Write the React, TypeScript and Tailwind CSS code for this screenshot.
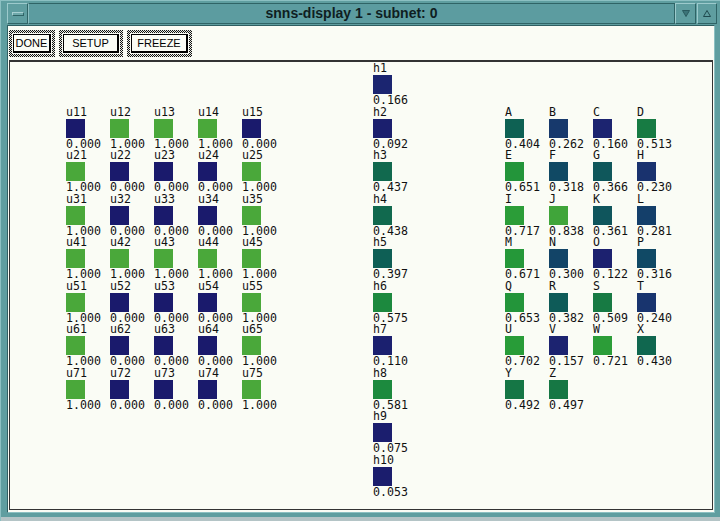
import type { ReactNode } from 'react'

const inputs = [
  [0, 1, 1, 1, 0],
  [1, 0, 0, 0, 1],
  [1, 0, 0, 0, 1],
  [1, 1, 1, 1, 1],
  [1, 0, 0, 0, 1],
  [1, 0, 0, 0, 1],
  [1, 0, 0, 0, 1],
]

const hidden = [0.166, 0.092, 0.437, 0.438, 0.397, 0.575, 0.11, 0.581, 0.075, 0.053]

const outputs: [string, number][] = [
  ['A', 0.404], ['B', 0.262], ['C', 0.16], ['D', 0.513],
  ['E', 0.651], ['F', 0.318], ['G', 0.366], ['H', 0.23],
  ['I', 0.717], ['J', 0.838], ['K', 0.361], ['L', 0.281],
  ['M', 0.671], ['N', 0.3], ['O', 0.122], ['P', 0.316],
  ['Q', 0.653], ['R', 0.382], ['S', 0.509], ['T', 0.24],
  ['U', 0.702], ['V', 0.157], ['W', 0.721], ['X', 0.43],
  ['Y', 0.492], ['Z', 0.497],
]

// activation -> colour, dark blue (0) through teal to green (1)
const stops: [number, number[]][] = [
  [0, [26, 26, 108]],
  [0.15, [28, 34, 112]],
  [0.25, [24, 54, 110]],
  [0.32, [16, 74, 100]],
  [0.4, [14, 96, 84]],
  [0.5, [22, 120, 68]],
  [0.6, [30, 142, 60]],
  [0.7, [40, 156, 56]],
  [0.85, [66, 166, 58]],
  [1, [74, 168, 58]],
]

function actColor(v: number) {
  for (let i = 1; i < stops.length; i++) {
    const [b, cb] = stops[i]
    const [a, ca] = stops[i - 1]
    if (v <= b) {
      const t = (v - a) / (b - a)
      const c = ca.map((x, k) => Math.round(x + (cb[k] - x) * t))
      return `rgb(${c[0]},${c[1]},${c[2]})`
    }
  }
  return 'rgb(74,168,58)'
}

function Unit({ label, value }: { label: string; value: number }) {
  return (
    <div className="flex flex-col items-start">
      <span className="h-[10px] leading-[10px]">{label}</span>
      <div
        className="mt-[2px] h-[19px] w-[19px]"
        style={{ backgroundColor: actColor(value) }}
      />
      <span className="mt-[1px] h-[10px] leading-[10px]">{value.toFixed(3)}</span>
    </div>
  )
}

function CmdButton({ width, children }: { width: string; children: ReactNode }) {
  return (
    <div className="bg-[repeating-conic-gradient(#111_0_25%,#e8ece4_0_50%)] bg-size-[2px_2px] p-[3px]">
      <div className="bg-[#fafcf5] p-[1px]">
        <div
          className={`${width} flex h-[19px] items-center justify-center border border-r-2 border-b-2 border-black bg-[#fafcf5] pt-[1px] font-['Liberation_Sans',sans-serif] text-[11px] text-black`}
        >
          {children}
        </div>
      </div>
    </div>
  )
}

export default function App() {
  return (
    <div className="flex h-[521px] w-[720px] flex-col overflow-hidden border-t border-l border-[#8cc0c2] bg-[#5f9ea0]">
      {/* ===== TITLE BAR ===== */}
      <div className="flex h-[24px] pt-[2px] pr-[3px] pl-[6px]">
        <div className="flex h-[21px] w-[21px] items-center justify-center border-t border-l border-r border-b border-t-[#9ccacc] border-l-[#9ccacc] border-r-[#2f6466] border-b-[#2f6466]">
          <div className="h-[4px] w-[12px] border-t border-l border-r border-b border-t-[#a8d0d2] border-l-[#a8d0d2] border-r-[#2f6466] border-b-[#2f6466] bg-[#6ea8aa]" />
        </div>
        <div className="flex h-[21px] flex-1 items-center justify-center border-t border-l border-r border-b border-t-[#2f6466] border-l-[#8cc0c2] border-r-[#2f6466] border-b-[#2f6466] bg-[#5c9ca0] font-['Liberation_Sans',sans-serif] text-[14px] font-bold text-[#0f1e22]">
          snns-display 1 - subnet: 0
        </div>
        <div className="flex h-[21px] w-[21px] items-center justify-center border-t border-l border-r border-b border-t-[#9ccacc] border-l-[#9ccacc] border-r-[#2f6466] border-b-[#2f6466]">
          <svg width="8" height="7" viewBox="0 0 8 7">
            <path d="M0.5 0.5 L7.5 0.5 L4 6.5 Z" fill="#3c7478" stroke="#2a5a5e" strokeWidth="1" />
          </svg>
        </div>
        <div className="ml-[1px] flex h-[21px] w-[20px] items-center justify-center border-t border-l border-r border-b border-t-[#9ccacc] border-l-[#9ccacc] border-r-[#2f6466] border-b-[#2f6466]">
          <svg width="8" height="7" viewBox="0 0 8 7">
            <path d="M4 0.5 L7.5 6.5 L0.5 6.5 Z" fill="none" stroke="#1f4a4e" strokeWidth="1" />
          </svg>
        </div>
      </div>

      {/* ===== CONTENT ===== */}
      <div className="mr-[5px] ml-[6px] flex flex-1 flex-col border-t border-l border-r border-b border-t-[#2f5f62] border-l-[#2f5f62] border-r-[#8cc0c2] border-b-[#8cc0c2] bg-[#fafcf5]">
        {/* buttons */}
        <div className="flex gap-[4px] pt-[4px] pl-[1px]">
          <CmdButton width="w-[38px]">DONE</CmdButton>
          <CmdButton width="w-[56px]">SETUP</CmdButton>
          <CmdButton width="w-[57px]">FREEZE</CmdButton>
        </div>

        {/* network canvas */}
        <div className="mx-[1px] mt-[3px] mb-[2px] flex flex-1 border border-t-2 border-[#333] pt-[1px] pl-[56px] font-['DejaVu_Sans_Mono',monospace] text-[11.6px] text-[#111]">
          <div className="mt-[43.5px] grid auto-rows-[43.5px] grid-cols-[repeat(5,44px)] self-start">
            {inputs.map((row, r) =>
              row.map((v, c) => (
                <Unit key={`u${r}${c}`} label={`u${r + 1}${c + 1}`} value={v} />
              )),
            )}
          </div>

          <div className="ml-[87px] grid w-[44px] auto-rows-[43.5px] self-start">
            {hidden.map((v, i) => (
              <Unit key={`h${i}`} label={`h${i + 1}`} value={v} />
            ))}
          </div>

          <div className="mt-[43.5px] ml-[88px] grid auto-rows-[43.5px] grid-cols-[repeat(4,44px)] self-start">
            {outputs.map(([l, v]) => (
              <Unit key={l} label={l} value={v} />
            ))}
          </div>
        </div>
      </div>

      {/* bottom frame */}
      <div className="h-[8px] border-b-4 border-[#b4c4c6]" />
    </div>
  )
}
